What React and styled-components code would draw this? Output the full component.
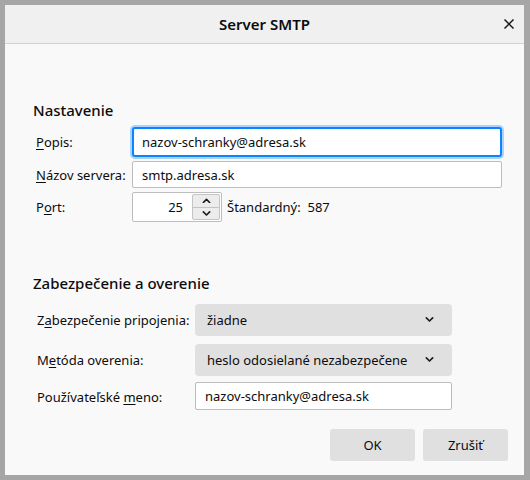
import React from "react";
import styled, { createGlobalStyle } from "styled-components";

const Global = createGlobalStyle`
  html, body { margin: 0; padding: 0; background: #a6a6a6; }
  body { font-family: "Noto Sans", "Open Sans", sans-serif; color: #0c0c0d; }
  * { box-sizing: border-box; }
`;

const Frame = styled.div`
  width: 530px;
  height: 480px;
  border: 5px solid #a6a6a6;
  border-right-width: 6px;
  background: #f9f9f9;
  display: flex;
  flex-direction: column;
`;

const TitleBar = styled.div`
  height: 39px;
  flex: none;
  background: #f0f0f0;
  border-bottom: 1px solid #d2d2d2;
  display: flex;
  align-items: center;
  justify-content: center;
  position: relative;
  font-size: 15px;
  font-weight: 600;
`;

const Close = styled.span`
  position: absolute;
  right: 8px;
  top: 12px;
  width: 14px;
  height: 14px;
  display: flex;
`;

const Body = styled.div`
  flex: 1;
  padding: 56px 16px 0 28px;
  display: flex;
  flex-direction: column;
`;

const Heading = styled.div`
  font-size: 15px;
  font-weight: 500;
  line-height: 20px;
  margin-top: ${(p) => p.$top || 0}px;
  margin-bottom: ${(p) => p.$gap}px;
`;

const Form = styled.div`
  display: grid;
  grid-template-columns: ${(p) => p.$label}px auto;
  row-gap: ${(p) => p.$row}px;
  padding-left: ${(p) => p.$indent}px;
  align-items: center;
  font-size: 13px;
`;

const Label = styled.label`
  white-space: nowrap;
  u { text-decoration: underline; text-underline-offset: 2px; }
`;

const TextBox = styled.div`
  width: ${(p) => p.$w}px;
  height: ${(p) => p.$h}px;
  margin-top: ${(p) => (p.$tight ? -2 : 0)}px;
  background: #fff;
  border: 1px solid #bdbdbd;
  border-radius: 2px;
  display: flex;
  align-items: center;
  padding-left: 9px;
  font-size: 13px;
  ${(p) =>
    p.$focused &&
    `
    border: 2px solid #0a84ff;
    box-shadow: 0 0 0 2px #a9d3fd;
    padding-left: 8px;
    border-radius: 3px;
  `}
`;

const PortRow = styled.div`
  display: flex;
  align-items: center;
  gap: 5px;
`;

const Spinner = styled.div`
  width: 90px;
  height: 30px;
  background: #fff;
  border: 1px solid #bdbdbd;
  border-radius: 2px;
  display: flex;
`;

const SpinValue = styled.div`
  flex: 1;
  display: flex;
  align-items: center;
  justify-content: flex-end;
  padding-right: 9px;
`;

const SpinButtons = styled.div`
  width: 28px;
  margin: 1px 1px 1px 0;
  display: flex;
  flex-direction: column;
  border: 1px solid #c4c4c4;
  border-radius: 2px;
  background: #ececec;
`;

const SpinButton = styled.div`
  flex: 1;
  display: flex;
  align-items: center;
  justify-content: center;
  & + & { border-top: 1px solid #c4c4c4; }
`;

const Hint = styled.span`
  white-space: pre;
`;

const Select = styled.div`
  width: 257px;
  height: 32px;
  background: #e0e0e0;
  border-radius: 4px;
  display: flex;
  align-items: center;
  justify-content: space-between;
  padding: 0 18px 0 12px;
  font-size: 13px;
`;

const Buttons = styled.div`
  display: flex;
  justify-content: flex-end;
  gap: 8px;
  margin-top: 19px;
`;

const Button = styled.div`
  width: 85px;
  height: 32px;
  background: #e0e0e0;
  border-radius: 3px;
  display: flex;
  align-items: center;
  justify-content: center;
  font-size: 13px;
`;

const Chevron = ({ up, size = 10 }) => (
  <svg width={size} height={size * 0.6} viewBox="0 0 10 6">
    <path
      d={up ? "M1.5 5 L5 1.5 L8.5 5" : "M1.5 1 L5 4.5 L8.5 1"}
      fill="none"
      stroke="#1a1a1a"
      strokeWidth="1.8"
      strokeLinecap="round"
      strokeLinejoin="round"
    />
  </svg>
);

export default function App() {
  return (
    <>
      <Global />
      <Frame>
        <TitleBar>
          Server SMTP
          <Close>
            <svg width="14" height="14" viewBox="0 0 14 14">
              <path d="M2.5 2.5 L11.5 11.5 M11.5 2.5 L2.5 11.5" stroke="#1a1a1a" strokeWidth="1.5" />
            </svg>
          </Close>
        </TitleBar>
        <Body>
          <Heading $gap={7}>Nastavenie</Heading>
          <Form $label={96} $row={4} $indent={3}>
            <Label>
              <u>P</u>opis:
            </Label>
            <TextBox $w={370} $h={30} $focused>
              nazov-schranky@adresa.sk
            </TextBox>
            <Label>
              <u>N</u>ázov servera:
            </Label>
            <TextBox $w={370} $h={27}>
              smtp.adresa.sk
            </TextBox>
            <Label>
              P<u>o</u>rt:
            </Label>
            <PortRow>
              <Spinner>
                <SpinValue>25</SpinValue>
                <SpinButtons>
                  <SpinButton>
                    <Chevron up size={9} />
                  </SpinButton>
                  <SpinButton>
                    <Chevron size={9} />
                  </SpinButton>
                </SpinButtons>
              </Spinner>
              <Hint>Štandardný:  587</Hint>
            </PortRow>
          </Form>
          <Heading $top={51} $gap={11}>
            Zabezpečenie a overenie
          </Heading>
          <Form $label={158} $row={8} $indent={4}>
            <Label>
              Z<u>a</u>bezpečenie pripojenia:
            </Label>
            <Select>
              žiadne
              <Chevron size={9} />
            </Select>
            <Label>
              M<u>e</u>tóda overenia:
            </Label>
            <Select>
              heslo odosielané nezabezpečene
              <Chevron size={9} />
            </Select>
            <Label>
              Používateľské <u>m</u>eno:
            </Label>
            <TextBox $w={257} $h={28} $tight>
              nazov-schranky@adresa.sk
            </TextBox>
          </Form>
          <Buttons>
            <Button>OK</Button>
            <Button>Zrušiť</Button>
          </Buttons>
        </Body>
      </Frame>
    </>
  );
}
